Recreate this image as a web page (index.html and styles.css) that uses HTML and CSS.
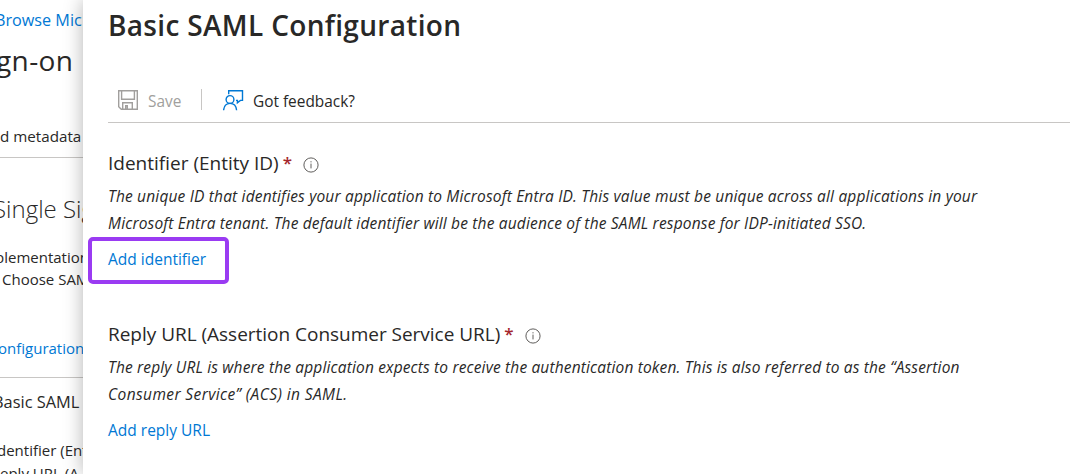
FILE: index.html
```html
<!DOCTYPE html>
<html lang="en">

<head>
    <meta charset="UTF-8">
    <meta name="viewport" content="width=device-width, initial-scale=1.0">
    <title>Basic SAML Configuration</title>
    <link rel="stylesheet" href="styles.css">
</head>

<body>

    <!-- Page behind the panel -->
    <div class="page">
        <a class="page-link browse">Browse Mic</a>
        <div class="page-title">gn-on</div>
        <div class="page-command">d metadata</div>
        <div class="page-heading">Single Sig</div>
        <div class="page-text implementation">plementation</div>
        <div class="page-text choose">Choose SAM</div>
        <a class="page-link configuration">onfiguration</a>
        <div class="card-title">Basic SAML</div>
        <div class="page-text identifier">dentifier (Ent</div>
        <div class="page-text reply">eply URL (A</div>
    </div>

    <!-- Configuration panel -->
    <main class="panel">
        <h1>Basic SAML Configuration</h1>

        <div class="toolbar">
            <svg class="icon-save" width="20" height="20" viewBox="0 0 20 20">
                <path d="M.7 .7H19.3V19.3H3.3L.7 16.7ZM3.6 .7V9.3H16.4V.7M4.7 19V12.7H14.3V19M7.7 19V15.7H9.3V19" />
            </svg>
            <span class="save">Save</span>
            <span class="divider"></span>
            <svg class="icon-feedback" width="21" height="21" viewBox="0 0 21 21">
                <path d="M5.7 4.2V.8H19.5V10.4H17.4L14.4 12.8V10.4H13" />
                <circle cx="7" cy="9.5" r="3.9" />
                <path d="M.6 20.2C1 16.1 3.4 13.4 7 13.4S13.2 16.1 13.6 20.2" />
            </svg>
            <span class="feedback">Got feedback?</span>
        </div>

        <section class="field">
            <h2>
                <span class="label">Identifier (Entity ID)</span>
                <span class="required">*</span>
                <svg class="icon-info" width="16" height="16" viewBox="0 0 16 16">
                    <circle cx="8" cy="8" r="7.1" />
                    <path d="M8 6.6V11.4M8 4.2V5.4" />
                </svg>
            </h2>
            <p>
                <span class="line">The unique ID that identifies your application to Microsoft Entra ID. This value must be unique across all applications in your</span>
                <span class="line">Microsoft Entra tenant. The default identifier will be the audience of the SAML response for IDP-initiated SSO.</span>
            </p>
            <a class="add highlight">Add identifier</a>
        </section>

        <section class="field">
            <h2>
                <span class="label label-reply">Reply URL (Assertion Consumer Service URL)</span>
                <span class="required">*</span>
                <svg class="icon-info" width="16" height="16" viewBox="0 0 16 16">
                    <circle cx="8" cy="8" r="7.1" />
                    <path d="M8 6.6V11.4M8 4.2V5.4" />
                </svg>
            </h2>
            <p>
                <span class="line line-reply">The reply URL is where the application expects to receive the authentication token. This is also referred to as the “Assertion</span>
                <span class="line line-short">Consumer Service” (ACS) in SAML.</span>
            </p>
            <a class="add">Add reply URL</a>
        </section>
    </main>

</body>

</html>
```

FILE: styles.css
```css
* {
    box-sizing: border-box;
}

body {
    margin: 0;
    height: 474px;
    display: flex;
    overflow: hidden;
    background: #fff;
    color: #292827;
    font-family: "Open Sans", "Noto Sans", sans-serif;
    font-size: 15.4px;
    white-space: nowrap;
}

.page {
    width: 83px;
    flex: none;
    overflow: hidden;
}

.page > * {
    display: block;
}

.page-link {
    color: #0078d4;
}

.browse {
    height: 24px;
    margin: 8px 0 0 -5px;
    font-size: 16.2px;
    line-height: 24px;
}

.page-title {
    height: 40px;
    margin: 9px 0 0 -4px;
    font-size: 28px;
    letter-spacing: 0.4px;
    line-height: 38px;
}

.page-command {
    height: 41px;
    margin-top: 36px;
    font-size: 15.2px;
    line-height: 39px;
    border-bottom: 1px solid #c8c6c4;
}

.page-heading {
    height: 36px;
    margin: 34px 0 0 -7px;
    font-size: 24px;
    font-weight: 300;
    line-height: 34px;
}

.page-text {
    height: 22px;
    font-size: 15px;
    line-height: 22px;
}

.implementation {
    margin: 18px 0 0 -5px;
}

.choose {
    margin-left: 2px;
}

.configuration {
    height: 41px;
    margin: 47px 0 0;
    font-size: 15px;
    line-height: 22px;
    text-indent: -2px;
    border-bottom: 1px solid #c8c6c4;
}

.card-title {
    height: 24px;
    margin: 12px 0 0 -7px;
    font-size: 16.4px;
    line-height: 24px;
}

.identifier {
    margin: 25px 0 0 -3px;
}

.reply {
    margin-top: 1px;
}

.panel {
    position: relative;
    flex: 1;
    padding-left: 25px;
    background: #fff;
    box-shadow: 0 0 18px rgba(0, 0, 0, 0.3);
}

h1 {
    height: 40px;
    margin: 6px 0 0;
    font-size: 28px;
    font-weight: 600;
    letter-spacing: 0.33px;
    line-height: 38px;
}

.toolbar {
    display: flex;
    align-items: center;
    height: 44px;
    margin-top: 33px;
    padding-left: 10px;
    border-bottom: 1px solid #c8c6c4;
}

.toolbar svg {
    fill: none;
    stroke-width: 1.4;
}

.icon-save {
    margin-top: -1px;
    stroke: #a19f9d;
}

.save {
    width: 33px;
    margin-left: 10px;
    padding-top: 2px;
    color: #a19f9d;
}

.divider {
    width: 1px;
    height: 21px;
    margin: -2px 21px 0 20px;
    background: #c8c6c4;
}

.icon-feedback {
    stroke: #0078d4;
}

.feedback {
    margin-left: 9px;
    padding-top: 2px;
}

.field {
    height: 171px;
    padding-top: 26px;
}

h2 {
    display: flex;
    align-items: center;
    height: 28px;
    margin: 0;
    font-size: 19px;
    font-weight: 400;
    line-height: 28px;
}

.label-reply {
    letter-spacing: -0.02px;
}

.required {
    margin-left: 4px;
    font-size: 17px;
    font-weight: 600;
    color: #a4262c;
}

.icon-info {
    margin: 3px 0 0 11px;
    fill: none;
    stroke: #605e5c;
}

p {
    margin: 6px 0 0;
    font-size: 15.5px;
    font-style: italic;
    letter-spacing: 0.17px;
}

.line {
    display: block;
    height: 27px;
    line-height: 26px;
}

.line-reply {
    letter-spacing: 0.155px;
}

.line-short {
    letter-spacing: 0.4px;
}

.add {
    display: block;
    width: 141px;
    height: 47px;
    margin: 0 0 0 -20px;
    padding-left: 16px;
    border: 4px solid transparent;
    border-radius: 5px;
    color: #0078d4;
    font-size: 15.5px;
    line-height: 37px;
}

.highlight {
    border-color: #9a3bf2;
}
```
